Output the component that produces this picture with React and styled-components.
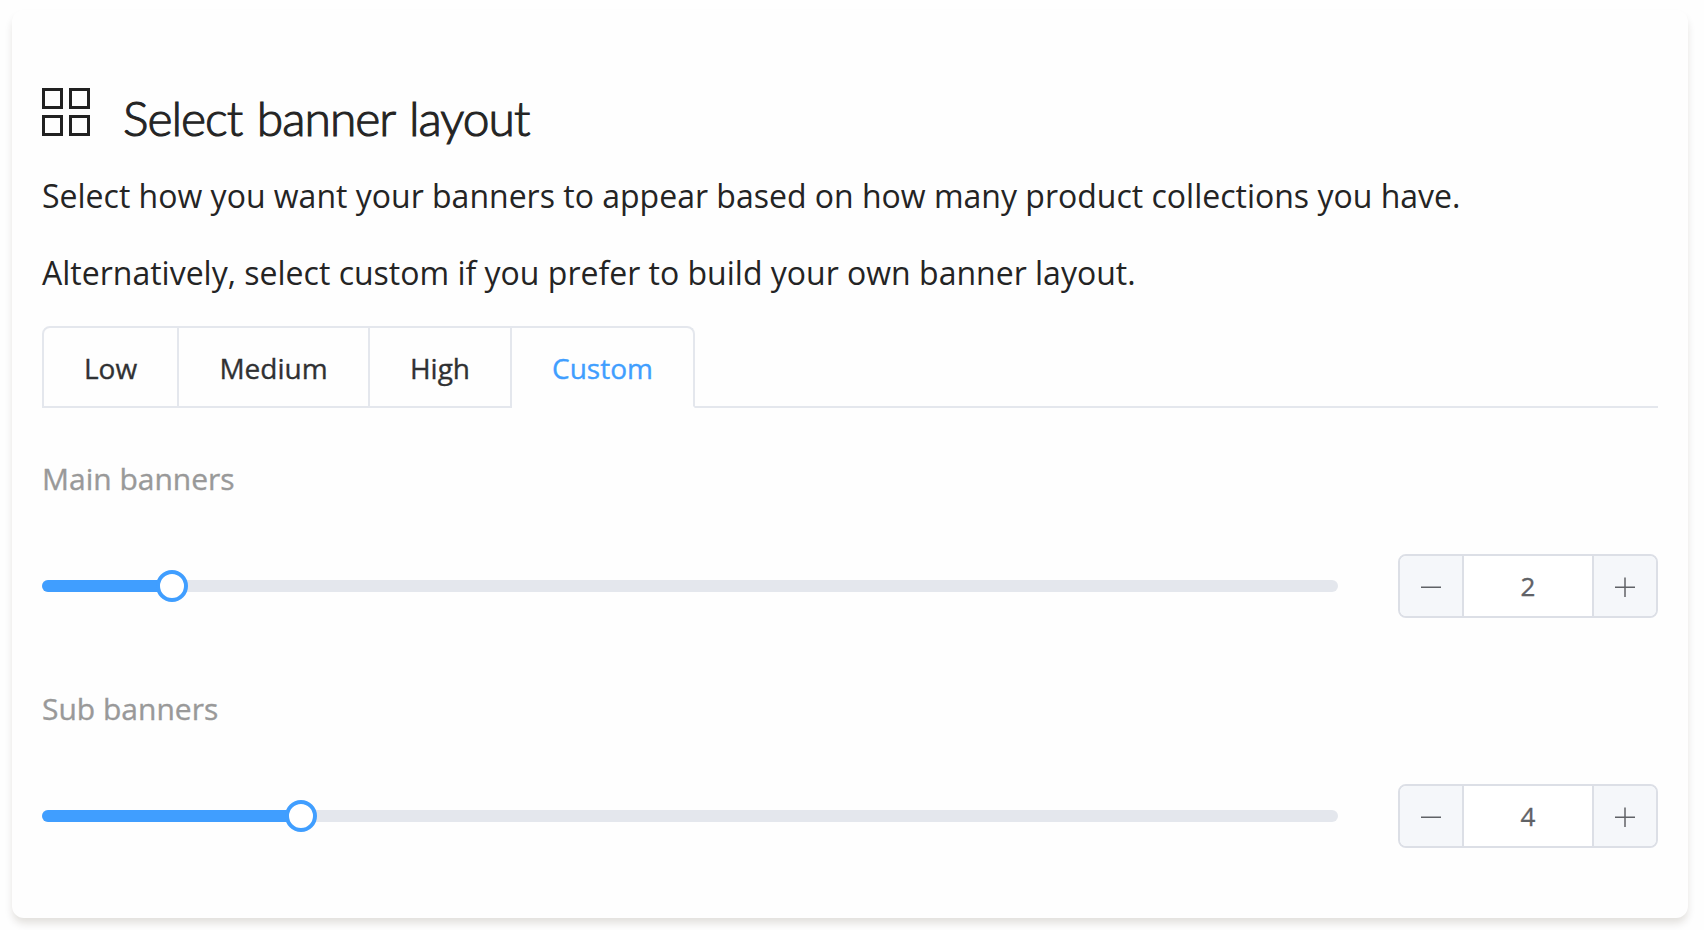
import React, { useState } from 'react';
import styled, { createGlobalStyle } from 'styled-components';

const GlobalStyle = createGlobalStyle`
  *, *::before, *::after { box-sizing: border-box; }
  body {
    margin: 0;
    background: #fefefe;
    color: #242424;
    font-family: 'Open Sans', sans-serif;
  }
  button { font-family: inherit; margin: 0; cursor: pointer; }
`;

const Page = styled.main`
  height: 930px;
  padding: 10px 16px 12px 12px;
  overflow: hidden;
`;

const Card = styled.section`
  height: 908px;
  padding: 72px 30px 0;
  border-radius: 12px;
  background: #fefefe;
  box-shadow: 0 6px 8px -1px rgba(40, 30, 10, 0.14);
`;

const Header = styled.header`
  display: flex;
  align-items: flex-start;
  height: 90px;
`;

const GridIcon = styled.svg`
  flex: none;
  width: 48px;
  height: 48px;
  margin: 6px 33px 0 0;
`;

const Title = styled.h1`
  margin: 0;
  font: 300 48px/72px Lato, sans-serif;
  letter-spacing: -1px;
  word-spacing: 2.6px;
  white-space: nowrap;
  -webkit-text-stroke: 1.1px currentColor;
`;

const Text = styled.p`
  margin: 0 0 29px;
  font-size: 32px;
  line-height: 48px;
  white-space: nowrap;
`;

const TabBar = styled.div`
  display: flex;
  height: 82px;
  margin-top: 29px;
`;

const Tab = styled.button`
  width: ${({ $width }) => $width}px;
  padding: 2px 0 0;
  border: 2px solid #e4e7ed;
  border-left-width: ${({ $first }) => ($first ? 2 : 0)}px;
  border-bottom-color: ${({ $active }) => ($active ? 'transparent' : '#e4e7ed')};
  border-radius: ${({ $first, $last }) => `${$first ? 8 : 0}px ${$last ? 8 : 0}px 0 0`};
  background: none;
  color: ${({ $active }) => ($active ? '#409eff' : '#303133')};
  font-size: 28px;
  font-weight: 400;
  line-height: 76px;
  -webkit-text-stroke: 0.35px currentColor;
`;

const TabRule = styled.div`
  flex: 1;
  border-bottom: 2px solid #e4e7ed;
`;

const Settings = styled.div`
  padding-top: 42px;
`;

const Setting = styled.section`
  height: 230px;
`;

const Label = styled.h2`
  margin: 0;
  color: #999;
  font-size: 30px;
  font-weight: 400;
  line-height: 58px;
  -webkit-text-stroke: 0.35px currentColor;
`;

const Controls = styled.div`
  display: flex;
  align-items: center;
  gap: 60px;
  margin-top: 46px;
`;

const Track = styled.div`
  position: relative;
  flex: 1;
  height: 12px;
  border-radius: 6px;
  background: #e4e7ed;
`;

const Fill = styled.div`
  height: 100%;
  border-radius: 6px 0 0 6px;
  background: #409eff;
`;

const Knob = styled.div`
  position: absolute;
  top: -10px;
  width: 32px;
  height: 32px;
  border: 4px solid #409eff;
  border-radius: 50%;
  background: #fff;
  transform: translateX(-50%);
`;

const Stepper = styled.div`
  display: flex;
  width: 260px;
  height: 64px;
  overflow: hidden;
  border: 2px solid #dcdfe6;
  border-radius: 8px;
  background: #fff;
`;

const StepButton = styled.button`
  display: flex;
  align-items: center;
  justify-content: center;
  width: 62px;
  padding: 2px 0 0;
  border: 0;
  background: #f5f7fa;
  color: #606266;
`;

const Value = styled.output`
  flex: 1;
  border: solid #dcdfe6;
  border-width: 0 2px;
  color: #606266;
  font-size: 26px;
  line-height: 60px;
  text-align: center;
  -webkit-text-stroke: 0.35px currentColor;
`;

const TABS = [
  { name: 'Low', width: 137 },
  { name: 'Medium', width: 191 },
  { name: 'High', width: 142 },
  { name: 'Custom', width: 183 },
];

const MAX_BANNERS = 20;

function StepIcon({ plus }) {
  return (
    <svg width="20" height="20" viewBox="0 0 20 20" fill="none" stroke="currentColor" strokeWidth="1.5">
      <path d={plus ? 'M0 10.25H20M10 0.5V20' : 'M0 10.25H20'} />
    </svg>
  );
}

function BannerSetting({ label, initial }) {
  const [value, setValue] = useState(initial);
  const position = `${(value / MAX_BANNERS) * 100}%`;
  return (
    <Setting>
      <Label>{label}</Label>
      <Controls>
        <Track>
          <Fill style={{ width: position }} />
          <Knob style={{ left: position }} />
        </Track>
        <Stepper>
          <StepButton aria-label="Decrease" onClick={() => setValue(Math.max(0, value - 1))}>
            <StepIcon />
          </StepButton>
          <Value>{value}</Value>
          <StepButton aria-label="Increase" onClick={() => setValue(Math.min(MAX_BANNERS, value + 1))}>
            <StepIcon plus />
          </StepButton>
        </Stepper>
      </Controls>
    </Setting>
  );
}

export default function App() {
  const [active, setActive] = useState('Custom');
  return (
    <>
      <GlobalStyle />
      <Page>
        <Card>
          <Header>
            <GridIcon viewBox="0 0 48 48" fill="none" stroke="#212121" strokeWidth="3">
              <path d="M1.5 1.5h18v18h-18zM28.5 1.5h18v18h-18zM1.5 28.5h18v18h-18zM28.5 28.5h18v18h-18z" />
            </GridIcon>
            <Title>Select banner layout</Title>
          </Header>
          <Text>Select how you want your banners to appear based on how many product collections you have.</Text>
          <Text>Alternatively, select custom if you prefer to build your own banner layout.</Text>
          <TabBar>
            {TABS.map(({ name, width }, i) => (
              <Tab
                key={name}
                $width={width}
                $first={i === 0}
                $last={i === TABS.length - 1}
                $active={name === active}
                onClick={() => setActive(name)}
              >
                {name}
              </Tab>
            ))}
            <TabRule />
          </TabBar>
          <Settings>
            <BannerSetting label="Main banners" initial={2} />
            <BannerSetting label="Sub banners" initial={4} />
          </Settings>
        </Card>
      </Page>
    </>
  );
}
